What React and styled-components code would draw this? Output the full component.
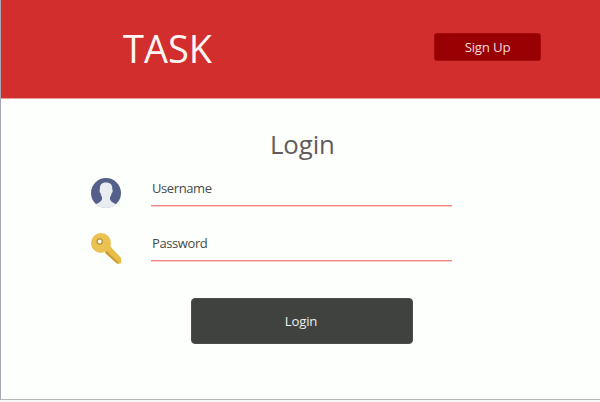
import React from "react";
import styled, { createGlobalStyle } from "styled-components";

const GlobalStyle = createGlobalStyle`
  * { box-sizing: border-box; }
  body { margin: 0; background: #f7f7f7; font-family: "Open Sans", "Noto Sans", sans-serif; }
  button { font: inherit; }
`;

const Window = styled.main`
  display: flex;
  flex-direction: column;
  width: 600px;
  height: 400px;
  background: #fdfffd;
  border-left: 1px solid #a9a8b2;
  border-bottom: 1px solid #b8b8b8;
  box-shadow: 0 1px 0 #d6d6d6;
`;

const Header = styled.header`
  display: flex;
  justify-content: space-between;
  align-items: flex-start;
  height: 99px;
  padding: 33px 59px 0 122px;
  background: #d12e2d;
  border-bottom: 1px solid #e3a09e;
`;

const Brand = styled.h1`
  margin: -5px 0 0;
  font-size: 38px;
  font-weight: 400;
  line-height: 40px;
  letter-spacing: 0;
  color: #fff6f4;
`;

const SignUpButton = styled.button`
  width: 107px;
  height: 28px;
  padding: 0;
  border: 1px solid #a50a0c;
  border-radius: 3px;
  background: #990003;
  color: #f3dada;
  font-size: 13.3px;
  letter-spacing: -0.25px;
  line-height: 26px;
`;

const Form = styled.form`
  display: flex;
  flex-direction: column;
  padding-left: 90px;
`;

const Title = styled.h2`
  width: 64px;
  margin: 27px 0 0 179px;
  font-size: 25.8px;
  font-weight: 400;
  line-height: 36px;
  letter-spacing: -0.1px;
  white-space: nowrap;
  color: #625b59;
`;

const Field = styled.label`
  display: grid;
  grid-template-columns: 30px 301px;
  column-gap: 30px;
  height: 31px;
  margin-top: ${(p) => p.$gap}px;
`;

const FieldIcon = styled.svg`
  display: block;
  width: 32px;
  height: 32px;
  margin-top: 3px;
`;

const FieldText = styled.span`
  height: 31px;
  padding: 3px 0 0 1px;
  border-bottom: 1px solid #ee8581;
  box-shadow: 0 1px 0 #fad0cb;
  color: #474b49;
  font-size: 13px;
  line-height: 20px;
  letter-spacing: -0.4px;
`;

const SubmitButton = styled.button`
  width: 222px;
  height: 46px;
  margin: 37px 0 0 100px;
  padding: 0 2px 0 0;
  border: 1px solid #4c4e4b;
  border-radius: 4px;
  background: #40423f;
  color: #eeeeec;
  font-size: 13.2px;
  letter-spacing: -0.2px;
`;

function UserIcon() {
  return (
    <FieldIcon viewBox="0 0 32 32">
      <circle cx="15" cy="15" r="15" fill="#53618a" />
      <path
        d="M15 4.5C10.6 4.5 8.5 7 9 11.2C8.2 11.6 8.5 14.8 9.6 15.2C10 17.2 10.5 18.4 11 19.1V21.2C10.8 23 8 25 4.5 26.2C10.3 31.3 19.7 31.3 25.5 26.2C22 25 19.2 23 19 21.2V19.1C19.8 18.4 20.2 17.2 20.6 15.2C21.8 14.8 22.1 11.6 21.2 11.2C21.8 7 19.4 4.5 15 4.5Z"
        fill="#e9edf0"
      />
    </FieldIcon>
  );
}

function KeyIcon() {
  return (
    <FieldIcon viewBox="0 0 32 32">
      <path d="M14 18L19 13L30.2 25V30.5H26L14 20Z" fill="#e9bd49" />
      <path d="M15 17.5L28.5 30.5H26L15 20.5Z" fill="#c79a32" />
      <circle cx="10" cy="10" r="10" fill="#ebc251" />
      <circle cx="8.7" cy="8.5" r="2.6" fill="#fdfdf0" stroke="#b5923c" strokeWidth="1.3" />
    </FieldIcon>
  );
}

export default function App() {
  return (
    <>
      <GlobalStyle />
      <Window>
        <Header>
          <Brand>TASK</Brand>
          <SignUpButton type="button">Sign Up</SignUpButton>
        </Header>
        <Form>
          <Title>Login</Title>
          <Field $gap={13}>
            <UserIcon />
            <FieldText>Username</FieldText>
          </Field>
          <Field $gap={24}>
            <KeyIcon />
            <FieldText>Password</FieldText>
          </Field>
          <SubmitButton type="button">Login</SubmitButton>
        </Form>
      </Window>
    </>
  );
}
